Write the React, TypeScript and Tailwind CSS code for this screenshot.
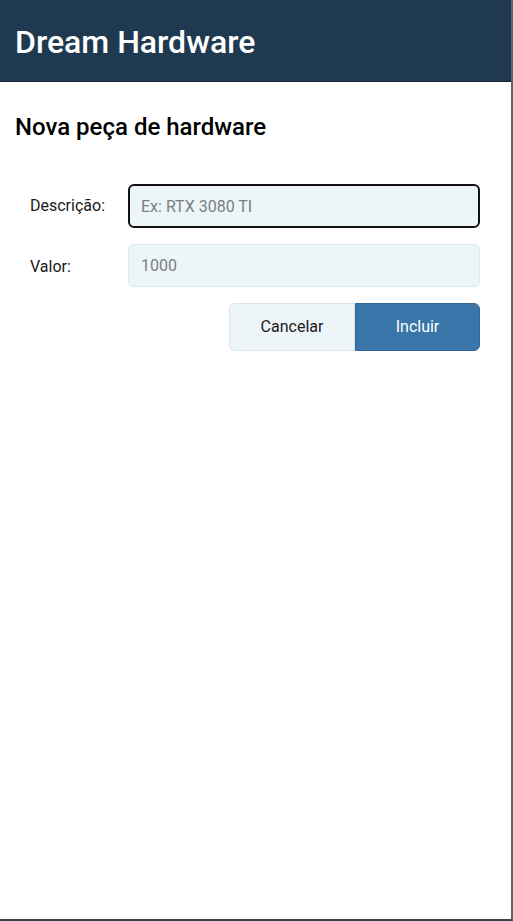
import React from "react";

export default function App() {
  return (
    <div
      className="w-[513px] h-[921px] bg-white border-r-2 border-b-2 border-r-[#5f6366] border-b-[#3c4348] flex flex-col"
      style={{ fontFamily: "Roboto, 'Liberation Sans', sans-serif" }}
    >
      <header className="h-[82px] shrink-0 bg-[#1f3a50] border-b border-[#122636] flex items-center px-[15px]">
        <h1 className="text-white text-[32px] font-medium leading-none pt-[2px]">Dream Hardware</h1>
      </header>
      <main className="pl-[15px] pr-[31px] pt-[33px]">
        <h2 className="text-black text-[24px] font-medium leading-none">Nova peça de hardware</h2>
        <form className="mt-[45px] flex flex-col" onSubmit={(e) => e.preventDefault()}>
          <div className="flex items-center h-[44px]">
            <label className="w-[113px] pl-[15px] text-[16px] text-[#1a1a1a]">Descrição:</label>
            <input
              autoFocus
              placeholder="Ex: RTX 3080 TI"
              className="flex-1 h-[44px] rounded-[6px] border-2 border-[#111] bg-[#ecf5f8] px-[11px] text-[16px] outline-none placeholder:text-[#7a7f82]"
            />
          </div>
          <div className="flex items-start h-[43px] mt-[16px]">
            <label className="w-[113px] pl-[15px] text-[16px] text-[#1a1a1a] pt-[11px]">Valor:</label>
            <input
              placeholder="1000"
              className="flex-1 h-[43px] rounded-[6px] border border-[#dde9ee] bg-[#ecf5f8] px-[12px] text-[16px] outline-none placeholder:text-[#7a7f82]"
            />
          </div>
          <div className="flex justify-end mt-[16px]">
            <button
              type="button"
              className="w-[126px] h-[48px] rounded-l-[6px] border border-[#d8e5eb] bg-[#eef5f8] text-[16px] text-[#1a1a1a]"
            >
              Cancelar
            </button>
            <button
              type="submit"
              className="w-[125px] h-[48px] rounded-r-[6px] border border-[#2f6896] bg-[#3a76aa] text-[16px] text-white"
            >
              Incluir
            </button>
          </div>
        </form>
      </main>
    </div>
  );
}
